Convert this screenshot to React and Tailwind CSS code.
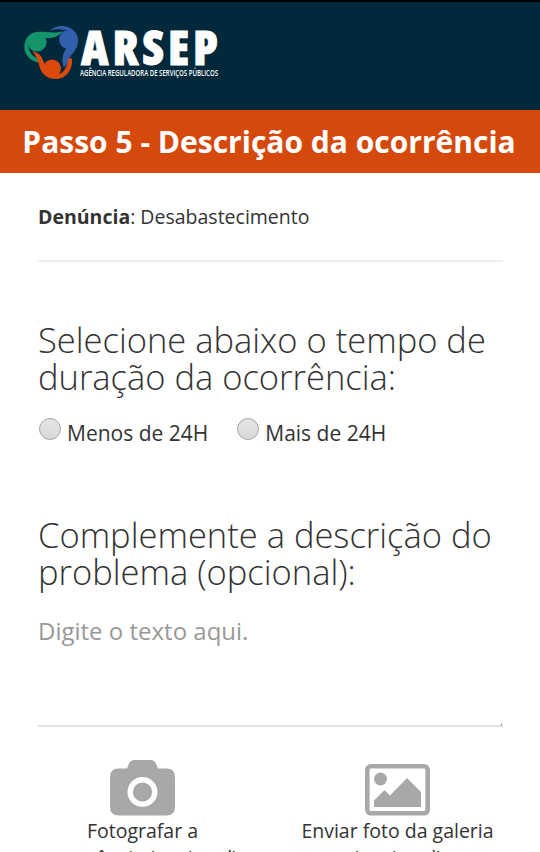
import React, { useState } from "react";

const durations = [
  { value: "menos", label: "Menos de 24H" },
  { value: "mais", label: "Mais de 24H" },
];

function Logo() {
  return (
    <svg
      className="block h-[62px] w-[200px]"
      viewBox="22 22 200 62"
      role="img"
      aria-label="ARSEP"
    >
      {/* verde */}
      <path
        d="M40 62.5C30 62 24 54 24.300 46C25 37 31 32 39 31.800C48 31.500 55 34 63 31C58 37.500 51 38.500 45.500 38L36 34C28 36 26.500 42 28.500 47C29.500 53 33 56.500 37 58Z"
        fill="#16956c"
      />
      <circle cx="37" cy="42" r="9.600" fill="#16956c" />
      {/* azul */}
      <path
        d="M49.500 31C53 27 58 25.700 63 26C72 26.500 78 33 78 41C78 50 71 54 69 59C68 62 67 65 64 67.500C61.500 61 62 55 66.500 48L74.500 43C76 36 71 31 65 30C59 29 54 29 49.500 31Z"
        fill="#315fac"
      />
      <circle cx="68.500" cy="39.500" r="9.400" fill="#315fac" />
      {/* laranja */}
      <path
        d="M32 51C38 53 41 55 42.500 59C44 62 44 63 45 66L50 75C61 77 67 70 68.500 58L72 58.500C73 70 66 79 56 79C46 79 41 73 39 65C38 60 36 55 32 51Z"
        fill="#dc490d"
      />
      <circle cx="52" cy="68.500" r="9" fill="#dc490d" />
      <text
        x="81"
        y="65"
        textLength="137"
        className="fill-white stroke-white stroke-[0.8px] font-['Open_Sans',sans-serif] text-[48px] font-extrabold [font-stretch:84%]"
      >
        ARSEP
      </text>
      <text
        x="80"
        y="75.500"
        textLength="138"
        lengthAdjust="spacingAndGlyphs"
        className="fill-white font-['Open_Sans',sans-serif] text-[8px] font-semibold"
      >
        AGÊNCIA REGULADORA DE SERVIÇOS PÚBLICOS
      </text>
    </svg>
  );
}

function CameraIcon() {
  return (
    <svg className="block h-[56px] w-[65px]" viewBox="0 0 65 56" fill="none">
      <path
        d="M8.500 8.500H17L19 3.500Q20.500 0 24.500 0H40.500Q44.500 0 46 3.500L48 8.500H56.500Q65 8.500 65 17V47Q65 55.500 56.500 55.500H8.500Q0 55.500 0 47V17Q0 8.500 8.500 8.500Z"
        fill="#a8a8a8"
      />
      <circle cx="32.500" cy="32" r="12.300" stroke="white" strokeWidth="5.400" />
    </svg>
  );
}

function PictureIcon() {
  return (
    <svg className="block h-[56px] w-[65px]" viewBox="0 0 65 56" fill="#a8a8a8">
      <rect
        x="2.300"
        y="6.300"
        width="60.400"
        height="47"
        rx="3.500"
        fill="none"
        stroke="#a8a8a8"
        strokeWidth="4.600"
      />
      <circle cx="15.500" cy="19" r="6.500" />
      <path d="M9 47V40.500L19.500 30L25 35.500L42 18L56 32V47Z" />
    </svg>
  );
}

export default function App() {
  const [duration, setDuration] = useState("");
  const [description, setDescription] = useState("");

  return (
    <div className="h-[852px] overflow-hidden bg-white font-['Open_Sans',sans-serif] text-[#333]">
      <header className="h-[110px] border-t-2 border-black bg-[#01283b] px-[22px] pt-5">
        <Logo />
      </header>
      <h1 className="h-[63px] bg-[#d6490d] pr-[2px] text-center text-[30px] leading-[63px] font-bold whitespace-nowrap text-white">
        Passo 5 - Descrição da ocorrência
      </h1>
      <main className="pr-[37px] pl-[38px]">
        <p className="h-[89px] border-b-2 border-[#eee] pt-[30px] text-[19.5px] leading-7">
          <b>Denúncia</b>: Desabastecimento
        </p>

        {/* Tempo de duração */}
        <h2 className="pt-[59px] text-[34.5px] leading-[37px] font-light whitespace-nowrap">
          Selecione abaixo o tempo de
          <br />
          duração da ocorrência:
        </h2>
        <div className="mt-[19px] flex h-9 gap-7">
          {durations.map((item) => (
            <label key={item.value} className="flex text-[21px] leading-[39px]">
              <input
                type="radio"
                name="duration"
                value={item.value}
                checked={duration === item.value}
                onChange={() => setDuration(item.value)}
                className="mt-1 mr-[6px] ml-px size-[22px] appearance-none rounded-full border border-[#a5a5a5] bg-linear-to-b from-[#e6e6e6] to-[#d8d8d8] checked:bg-[#555]"
              />
              {item.label}
            </label>
          ))}
        </div>

        {/* Descrição */}
        <h2 className="pt-[66px] text-[34.5px] leading-[37px] font-light whitespace-nowrap">
          Complemente a descrição do
          <br />
          problema (opcional):
        </h2>
        <div className="relative mt-[19px]">
          <textarea
            value={description}
            onChange={(e) => setDescription(e.target.value)}
            placeholder="Digite o texto aqui."
            className="block h-[118px] w-full resize-none border-b-2 border-[#e2e2e2] pt-[6px] text-[24px] leading-8 outline-none placeholder:text-[#999]"
          />
          <span className="absolute right-px bottom-[2px] size-px bg-[#555]" />
        </div>

        {/* Fotos */}
        <div className="mt-[33px] flex text-center text-[19.5px] leading-[27px]">
          <button type="button" className="flex w-[209px] flex-col items-center">
            <CameraIcon />
            <span className="mt-px whitespace-nowrap">
              Fotografar a
              <br />
              ocorrência (opcional)
            </span>
          </button>
          <button
            type="button"
            className="ml-[46px] flex w-[209px] flex-col items-center"
          >
            <PictureIcon />
            <span className="mt-px whitespace-nowrap">
              Enviar foto da galeria
              <br />
              (opcional)
            </span>
          </button>
        </div>
      </main>
    </div>
  );
}
